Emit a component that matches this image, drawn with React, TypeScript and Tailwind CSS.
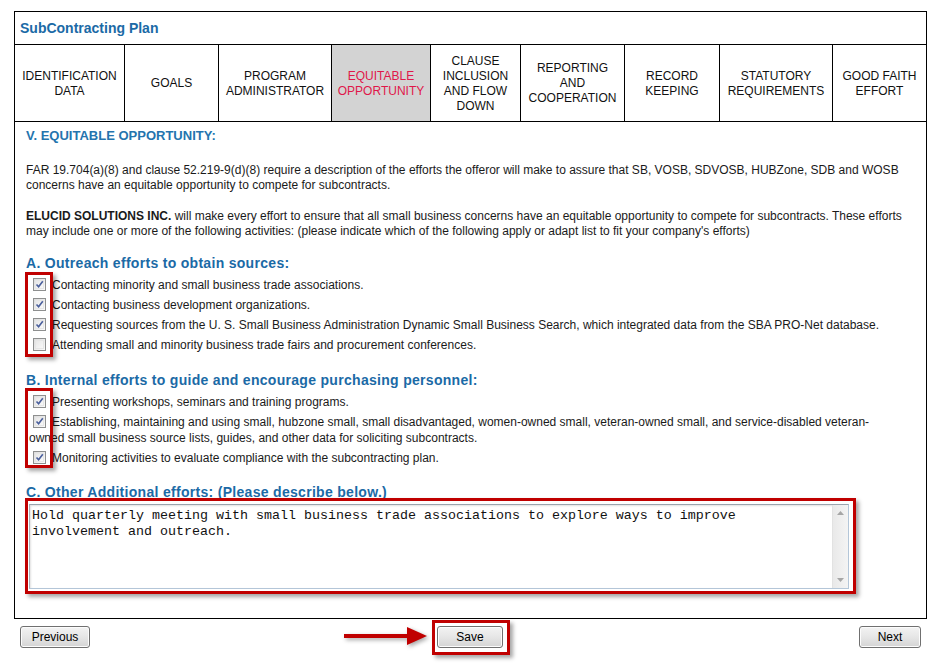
import React from "react";

const TABS = [
  { label: "IDENTIFICATION DATA", w: "w-[110px]" },
  { label: "GOALS", w: "w-[94px]" },
  { label: "PROGRAM ADMINISTRATOR", w: "w-[113px]" },
  { label: "EQUITABLE OPPORTUNITY", w: "w-[99px]", active: true },
  { label: "CLAUSE INCLUSION AND FLOW DOWN", w: "w-[90px]" },
  { label: "REPORTING AND COOPERATION", w: "w-[104px]" },
  { label: "RECORD KEEPING", w: "w-[95px]" },
  { label: "STATUTORY REQUIREMENTS", w: "w-[113px]" },
  { label: "GOOD FAITH EFFORT", w: "flex-1", last: true },
];

const OUTREACH = [
  { text: "Contacting minority and small business trade associations.", checked: true },
  { text: "Contacting business development organizations.", checked: true },
  {
    text: "Requesting sources from the U. S. Small Business Administration Dynamic Small Business Search, which integrated data from the SBA PRO-Net database.",
    checked: true,
  },
  { text: "Attending small and minority business trade fairs and procurement conferences.", checked: false },
];

const INTERNAL = [
  { text: "Presenting workshops, seminars and training programs.", checked: true },
  {
    text: "Establishing, maintaining and using small, hubzone small, small disadvantaged, women-owned small, veteran-owned small, and service-disabled veteran-owned small business source lists, guides, and other data for soliciting subcontracts.",
    checked: true,
  },
  { text: "Monitoring activities to evaluate compliance with the subcontracting plan.", checked: true },
];

function CheckBox({ checked }: { checked: boolean }) {
  return (
    <span className="inline-block align-[-2px] w-[13px] h-[13px] ml-[4px] mr-[6px] border border-[#8e8f8f] bg-gradient-to-br from-[#dcdcdc] to-[#fbfbfb] p-[1px]">
      <span className="block w-full h-full border border-[#e6e6e6] bg-gradient-to-br from-[#e8e8e8] to-[#f8f8f8]">
        {checked && (
          <svg viewBox="0 0 9 9" className="w-[9px] h-[9px] -mt-[1px] -ml-[1px]">
            <path d="M1.5 4.5 L3.6 6.8 L7.8 1.2" fill="none" stroke="#4a5f9c" strokeWidth="1.6" />
          </svg>
        )}
      </span>
    </span>
  );
}

function Item({ text, checked }: { text: string; checked: boolean }) {
  return (
    <div className="pl-[3px] pr-[8px] py-[2px] leading-[16px]">
      <CheckBox checked={checked} />
      {text}
    </div>
  );
}

function Button({ label, className }: { label: string; className: string }) {
  return (
    <button
      className={`${className} h-[22px] rounded-[3px] border border-[#707070] bg-gradient-to-b from-[#f3f3f3] via-[#e6e6e6] to-[#d4d4d4] text-[12px] text-black leading-none shadow-[inset_0_0_0_1px_#fcfcfc]`}
    >
      {label}
    </button>
  );
}

const redBox = "absolute border-[3px] border-[#c00000] shadow-[3px_3px_4px_rgba(0,0,0,0.35)] pointer-events-none";
const subHead = "leading-[16px] text-[14px] font-bold tracking-[0.3px] text-[#1b6aa6]";

export default function App() {
  return (
    <div className="relative w-[943px] h-[665px] bg-white pt-[11px] font-['Liberation_Sans',Arial,sans-serif] text-[12px] text-[#1a1a1a]">
      <div className="ml-[14px] w-[913px] border border-black">
        {/* title */}
        <div className="h-[33px] flex items-center pl-[5px] pt-[1px] border-b border-black text-[14px] font-bold text-[#1b6aa6]">
          SubContracting Plan
        </div>

        {/* tabs */}
        <div className="flex h-[77px] border-b border-black">
          {TABS.map((t) => (
            <div
              key={t.label}
              className={`${t.w} shrink-0 flex items-center justify-center text-center px-[4px] pt-[1px] leading-[15px] ${
                t.last ? "" : "border-r border-black"
              } ${t.active ? "bg-[#d3d3d3] text-[#e0174a]" : "text-[#111]"}`}
            >
              {t.label}
            </div>
          ))}
        </div>

        {/* content */}
        <div className="pl-[11px] pr-[14px] pb-[29px]">
          <div className="mt-[6px] leading-[16px] text-[13px] font-bold text-[#2474ae]">V. EQUITABLE OPPORTUNITY:</div>

          <p className="mt-[19px] leading-[15px]">
            FAR 19.704(a)(8) and clause 52.219-9(d)(8) require a description of the efforts the offeror will make to assure
            that SB, VOSB, SDVOSB, HUBZone, SDB and WOSB concerns have an equitable opportunity to compete for
            subcontracts.
          </p>

          <p className="mt-[16px] leading-[15px]">
            <b>ELUCID SOLUTIONS INC.</b> will make every effort to ensure that all small business concerns have an equitable
            opportunity to compete for subcontracts. These efforts may include one or more of the following activities:
            (please indicate which of the following apply or adapt list to fit your company's efforts)
          </p>

          <div className={`mt-[16px] ${subHead}`}>A. Outreach efforts to obtain sources:</div>
          <div className="mt-[4px]">
            {OUTREACH.map((it) => (
              <Item key={it.text} {...it} />
            ))}
          </div>

          <div className={`mt-[17px] ${subHead}`}>B. Internal efforts to guide and encourage purchasing personnel:</div>
          <div className="mt-[4px]">
            {INTERNAL.map((it) => (
              <Item key={it.text} {...it} />
            ))}
          </div>

          <div className={`mt-[16px] ${subHead}`}>C. Other Additional efforts: (Please describe below.)</div>

          <div className="mt-[4px] ml-[3px] w-[820px] h-[85px] flex border border-[#b4c6d8] border-t-[#9aa4ae] border-l-[#a7b0ba] shadow-[inset_1px_1px_2px_rgba(0,0,0,0.12)]">
            <div className="flex-1 pl-[2px] pt-[3px] font-['Liberation_Mono','Courier_New',monospace] text-[13.33px] leading-[16px] text-[#111]">
              Hold quarterly meeting with small business trade associations to explore ways to improve
              <br />
              involvement and outreach.
            </div>
            <div className="w-[16px] bg-gradient-to-r from-[#e9e9e9] to-[#f4f4f4] border-l border-[#e2e2e2] flex flex-col items-center justify-between py-[6px]">
              <svg viewBox="0 0 7 4" className="w-[7px] h-[4px]">
                <path d="M0 4 L3.5 0 L7 4 Z" fill="#a6a6a6" />
              </svg>
              <svg viewBox="0 0 7 4" className="w-[7px] h-[4px]">
                <path d="M0 0 L3.5 4 L7 0 Z" fill="#a6a6a6" />
              </svg>
            </div>
          </div>
        </div>
      </div>

      {/* footer buttons */}
      <div className="mt-[7px] pl-[20px] pr-[22px] flex">
        <Button label="Previous" className="w-[70px]" />
        <Button label="Save" className="w-[66px] ml-[347px]" />
        <Button label="Next" className="w-[62px] ml-auto" />
      </div>

      {/* annotation overlays */}
      <div className={`${redBox} left-[25px] top-[272px] w-[28px] h-[85px]`} />
      <div className={`${redBox} left-[25px] top-[388px] w-[28px] h-[80px]`} />
      <div className={`${redBox} left-[25px] top-[498px] w-[831px] h-[96px]`} />
      <div className={`${redBox} left-[432px] top-[620px] w-[78px] h-[35px]`} />
      <svg className="absolute left-[340px] top-[624px] w-[92px] h-[24px] drop-shadow-[2px_2px_2px_rgba(0,0,0,0.35)]" viewBox="0 0 92 24">
        <rect x="4" y="10" width="66" height="4" fill="#c00000" />
        <path d="M67 3 L87 12 L67 21 Z" fill="#c00000" />
      </svg>
    </div>
  );
}
